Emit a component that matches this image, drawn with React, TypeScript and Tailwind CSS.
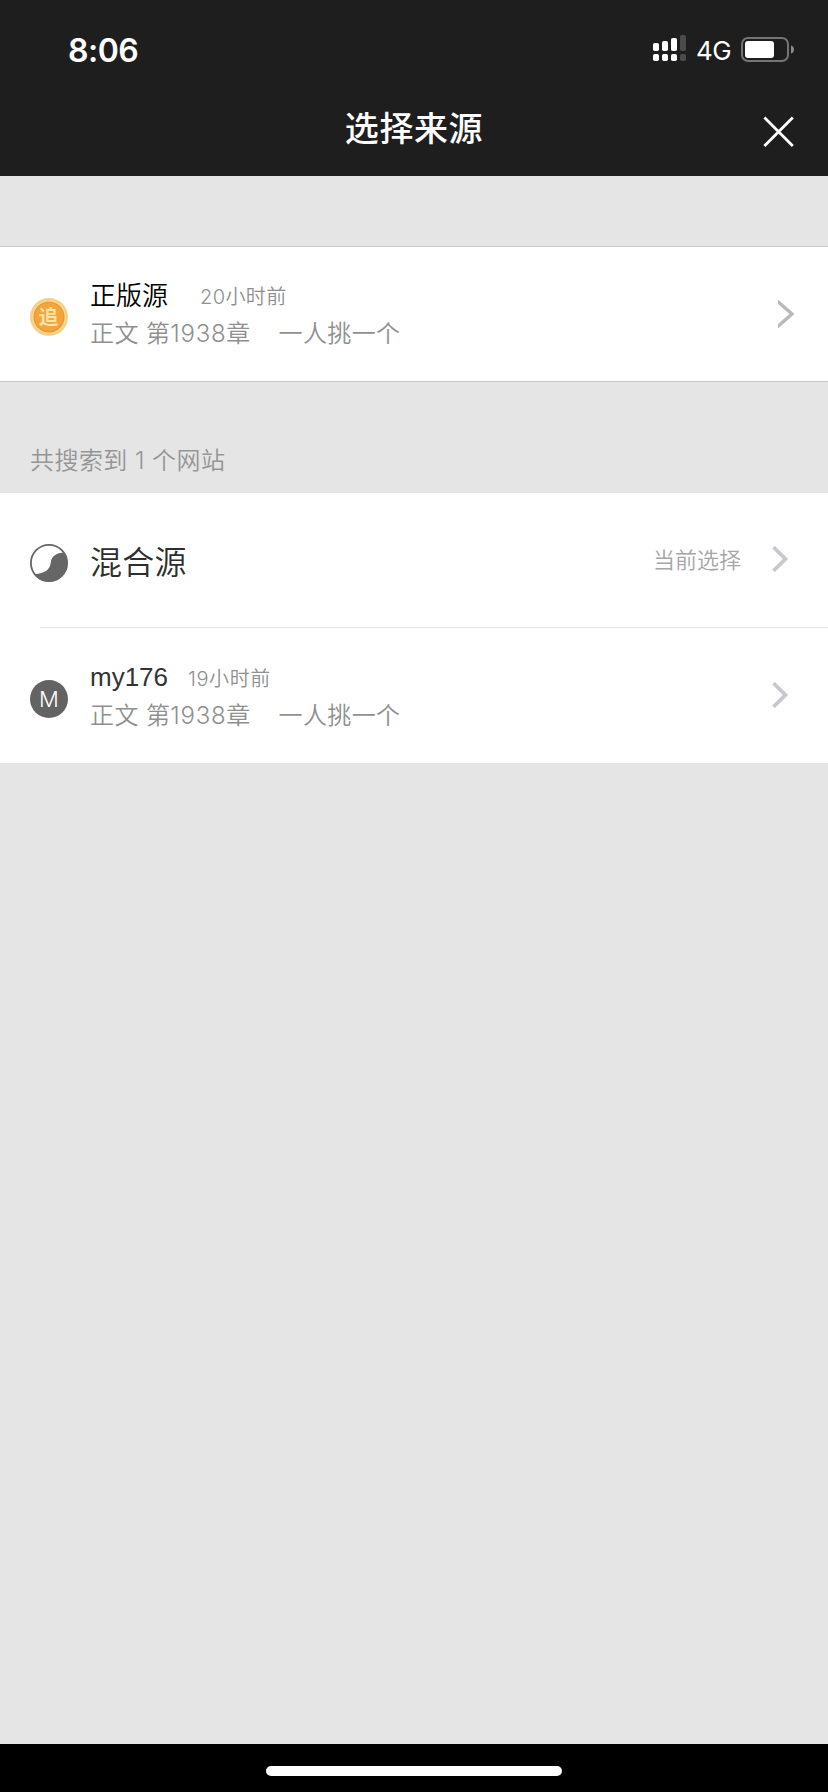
import type { ReactNode } from "react";

const UI = "font-['Inter','Noto_Sans_CJK_SC',sans-serif]";

function SignalIcon() {
  const bars = [
    { x: 0, y: 8, h: 8 },
    { x: 9, y: 6, h: 10 },
    { x: 18, y: 3, h: 13 },
    { x: 27, y: 0, h: 16 },
  ];
  return (
    <svg width="33" height="26" viewBox="0 0 33 26">
      {bars.map((b, i) => (
        <g key={b.x} fill={i < 3 ? "#ffffff" : "#4b4b4b"}>
          <rect x={b.x} y={b.y} width="6" height={b.h} rx="1.8" />
          <rect x={b.x} y="19" width="6" height="7" rx="1.8" />
        </g>
      ))}
    </svg>
  );
}

function BatteryIcon() {
  return (
    <svg width="54" height="25" viewBox="0 0 54 25">
      <rect x="1" y="1" width="46" height="23" rx="6" fill="none" stroke="#747474" strokeWidth="2" />
      <rect x="4" y="4" width="29" height="17" rx="3" fill="#ffffff" />
      <path d="M50 8.5 C52 9 53 10.6 53 12.5 C53 14.4 52 16 50 16.5 Z" fill="#8a8a8a" />
    </svg>
  );
}

function CloseIcon() {
  return (
    <svg width="32" height="32" viewBox="0 0 32 32">
      <path d="M1.4 1.6 L29.8 30 M29.8 1.6 L1.4 30" stroke="#ffffff" strokeWidth="2.8" fill="none" />
    </svg>
  );
}

function CoinIcon() {
  return (
    <svg width="38" height="38" viewBox="0 0 38 38">
      <circle cx="19" cy="19" r="19" fill="#f8cf87" />
      <circle cx="19" cy="19" r="16.6" fill="#ffdb9d" />
      <circle cx="19" cy="19" r="15.6" fill="#ea9a35" />
      <circle cx="19" cy="19" r="14.2" fill="#f3a43b" />
      <text x="18.4" y="26" textAnchor="middle" fill="#ffe3a8" className="text-[19.5px] font-bold">
        追
      </text>
    </svg>
  );
}

function BlendIcon() {
  return (
    <svg width="38" height="38" viewBox="0 0 38 38">
      <clipPath id="disc">
        <circle cx="19" cy="19" r="18.6" />
      </clipPath>
      <path
        clipPath="url(#disc)"
        d="M2 30.2 L5 30.2 C13 29.6 20 26.5 20.7 19 C21.2 12.4 26 8.8 34.3 8.5 L38 8.5 V38 H2 Z"
        fill="#666666"
      />
      <circle cx="19" cy="19" r="18.1" fill="none" stroke="#666666" strokeWidth="1.8" />
    </svg>
  );
}

function Chevron() {
  return (
    <svg width="17" height="26" viewBox="0 0 17 26">
      <path d="M1.5 1.2 L13.5 13 L1.5 24.8" stroke="#c7c7cc" strokeWidth="3.7" fill="none" />
    </svg>
  );
}

function WideChevron() {
  return (
    <svg width="17" height="28" viewBox="0 0 17 28">
      <path d="M-1 0.8 L14 14 L-1 27.2" stroke="#b9b9b9" strokeWidth="3.3" fill="none" />
    </svg>
  );
}

function Chapter() {
  return (
    <p className="pt-px text-[24px] leading-[36px] tracking-[0.4px] font-[350] whitespace-pre text-[#8f8f8f]">
      正文 第<span className="tracking-[0.7px]">1938</span>章
      <span className="tracking-[0.2px]">{"    "}</span>
      一人挑一个
    </p>
  );
}

function Row({ icon, children, className }: { icon: ReactNode; children: ReactNode; className: string }) {
  return (
    <div className={`flex items-start pl-[30px] ${className}`}>
      {icon}
      {children}
    </div>
  );
}

export default function App() {
  return (
    <div className={`flex h-[1792px] w-[828px] flex-col overflow-hidden bg-[#e5e5e5] ${UI}`}>
      <header className="h-[176px] shrink-0 bg-[#1e1e1e] text-white">
        <div className="flex h-[100px] items-start justify-between pt-[30px] pr-[33px] pl-[68px]">
          <span className="pt-px text-[32px] leading-[40px] font-semibold tracking-[-0.5px]">8:06</span>
          <div className="flex items-start">
            <div className="mt-[5px]">
              <SignalIcon />
            </div>
            <span className="mt-px ml-[10px] w-[45px] text-[26px] leading-[40px] tracking-[-0.6px]">4G</span>
            <div className="mt-[7px]">
              <BatteryIcon />
            </div>
          </div>
        </div>
        <div className="grid grid-cols-[1fr_auto_1fr] items-start pr-[33px]">
          <span />
          <h1 className="mt-px ml-[33px] text-[34px] leading-[56px] font-medium tracking-[0.6px]">选择来源</h1>
          <button className="mt-[16px] justify-self-end" aria-label="关闭">
            <CloseIcon />
          </button>
        </div>
      </header>

      <section className="mt-[70px] h-[136px] shrink-0 border-y border-[#c8c8c8] bg-white">
        <Row className="h-full" icon={<div className="mt-[51px]"><CoinIcon /></div>}>
          <div className="mt-[31px] ml-[22px] flex-1">
            <div className="flex items-start leading-[36px]">
              <span className="w-[110px] text-[26px] font-[350] text-black">正版源</span>
              <span className="pt-px text-[20px] font-[350] tracking-[0.4px] text-[#8f8f8f]">20小时前</span>
            </div>
            <Chapter />
          </div>
          <div className="mt-[53px] mr-[33px]">
            <WideChevron />
          </div>
        </Row>
      </section>

      <p className="mt-[61px] ml-[30px] h-[50px] shrink-0 text-[24px] leading-[36px] font-[350] tracking-[0.45px] text-[#959595]">
        共搜索到 1 个网站
      </p>

      <section className="h-[270px] shrink-0 bg-white">
        <Row className="h-[134px]" icon={<div className="mt-[51px]"><BlendIcon /></div>}>
          <span className="mt-[46px] ml-[22px] flex-1 text-[32px] leading-[48px] font-[350] tracking-[0.3px] text-[#2e2e2e]">混合源</span>
          <span className="mt-[49px] mr-[31px] text-[22px] leading-[36px] font-[350] text-[#a6a6a6]">当前选择</span>
          <div className="mt-[53px] mr-[39px]">
            <Chevron />
          </div>
        </Row>
        <hr className="ml-[40px] border-t border-[#e5e5e5]" />
        <Row
          className="h-[135px]"
          icon={
            <span className="mt-[52px] flex size-[38px] items-center justify-center rounded-full bg-[#636363] text-[22px] leading-none font-[350] text-white">
              M
            </span>
          }
        >
          <div className="mt-[31px] ml-[22px] flex-1">
            <div className="flex items-baseline leading-[36px]">
              <span className="w-[98px] font-['Liberation_Sans',sans-serif] text-[26px] text-[#333333]">my176</span>
              <span className="text-[20px] font-[350] tracking-[0.6px] text-[#8f8f8f]">19小时前</span>
            </div>
            <Chapter />
          </div>
          <div className="mt-[54px] mr-[39px]">
            <Chevron />
          </div>
        </Row>
      </section>

      <footer className="mt-auto flex h-[48px] shrink-0 justify-center bg-black pt-[22px]">
        <div className="h-[10px] w-[296px] rounded-full bg-white" />
      </footer>
    </div>
  );
}
